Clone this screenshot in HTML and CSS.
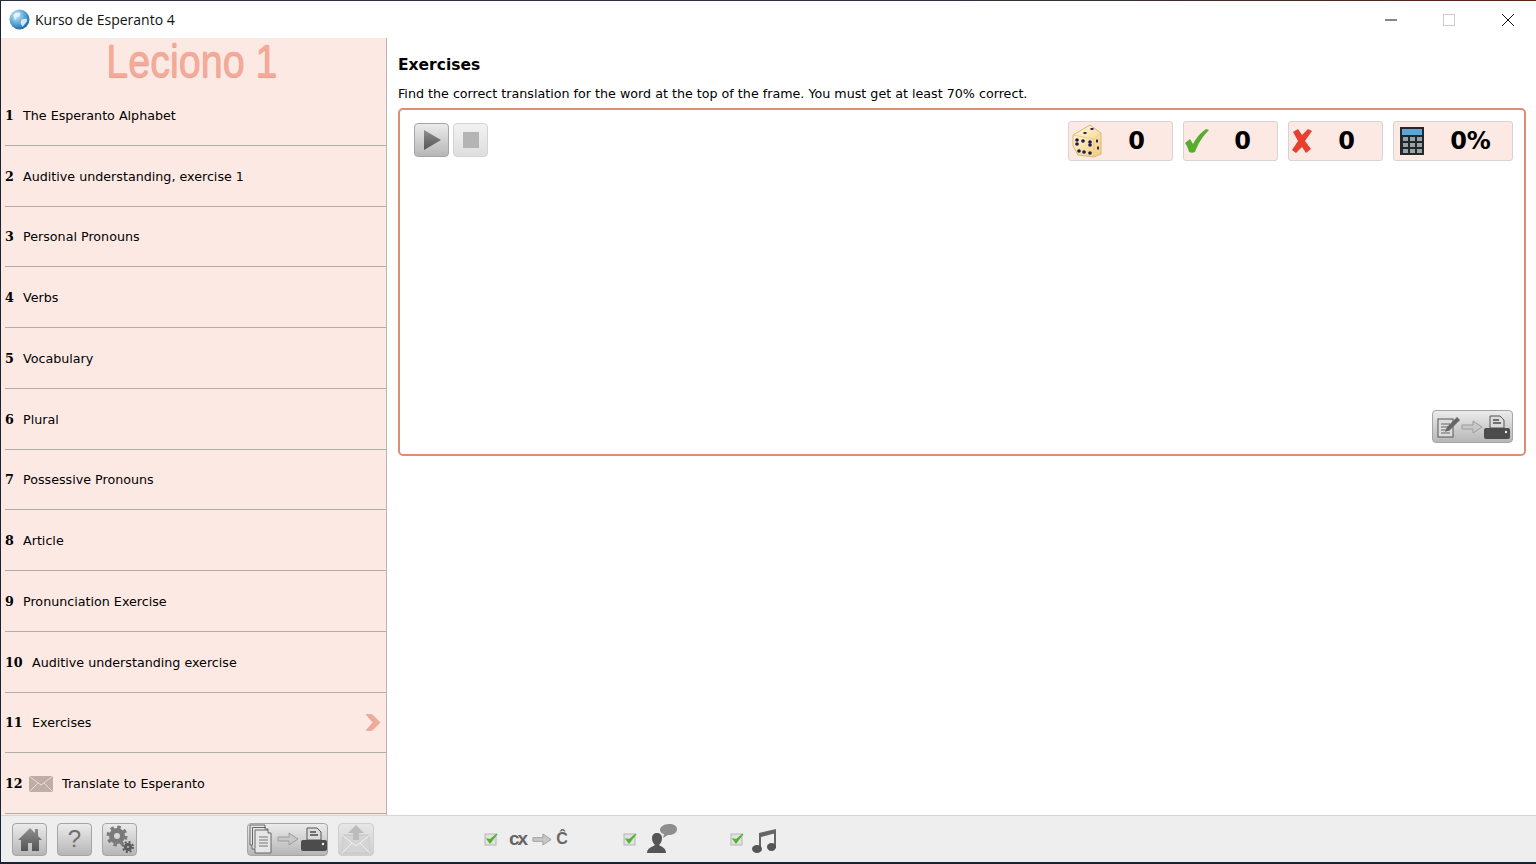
FILE: index.html
```html
<!DOCTYPE html>
<html lang="en">
<head>
  <meta charset="UTF-8">
  <title>Kurso de Esperanto 4</title>
  <link rel="stylesheet" href="styles.css">
</head>
<body>
  <svg class="defs" width="0" height="0">
    <defs>
      <radialGradient id="globe" cx=".35" cy=".3" r=".8">
        <stop offset="0" stop-color="#cfeaf9"/>
        <stop offset=".6" stop-color="#4b9bd0"/>
        <stop offset="1" stop-color="#155a94"/>
      </radialGradient>
      <linearGradient id="greyIcon" x1="0" y1="0" x2="0" y2="1">
        <stop offset="0" stop-color="#8f8f8f"/>
        <stop offset="1" stop-color="#545454"/>
      </linearGradient>
      <linearGradient id="diceFace" x1="0" y1="0" x2="1" y2="1">
        <stop offset="0" stop-color="#fffbe0"/>
        <stop offset="1" stop-color="#f4cc78"/>
      </linearGradient>
      <symbol id="arrow" viewBox="0 0 22 14">
        <path d="M1 5h11V1l9 6-9 6V9H1z" fill="#c8c8c8" stroke="#9c9c9c"/>
      </symbol>
      <symbol id="printer" viewBox="0 0 26 24">
        <path d="M6 1h10l4 4v8H6z" fill="#dcdcdc" stroke="#555" stroke-width="1"/>
        <path d="M9 5h6M9 8h8" stroke="#4c4c4c" stroke-width="1.4"/>
        <rect x="0" y="13" width="26" height="11" rx="2" fill="#4c4c4c"/>
        <circle cx="22" cy="17" r="1.2" fill="#eee"/>
      </symbol>
      <symbol id="tick" viewBox="0 0 14 14">
        <rect x="1" y="2" width="11" height="11" fill="#e2e2e2" stroke="#b5b5b5"/>
        <path d="M3 7l3 4 7-9-6.500 5.500z" fill="#4fb52e" stroke="#4fb52e" stroke-width="1.200"/>
      </symbol>
    </defs>
  </svg>

  <div class="window">
    <div class="titlebar">
      <svg class="app-icon" viewBox="0 0 20 20">
        <circle cx="10" cy="10" r="9.500" fill="url(#globe)"/>
        <path d="M4 6c2-3 5-3 7-2l-1 3-3 1-1 3zM12 10l5-1 0 3-4 5-2-3z" fill="#eaf6fc" opacity=".85"/>
      </svg>
      <span class="app-name">Kurso de Esperanto 4</span>
      <div class="win-controls">
        <svg class="win-btn" viewBox="0 0 12 12"><path d="M0 6h12" stroke="#111"/></svg>
        <svg class="win-btn win-max" viewBox="0 0 12 12"><rect x=".5" y=".5" width="11" height="11" fill="none" stroke="#ccc"/></svg>
        <svg class="win-btn" viewBox="0 0 12 12"><path d="M0 0l12 12M12 0L0 12" stroke="#111"/></svg>
      </div>
    </div>

    <div class="content">
      <aside class="sidebar">
        <div class="lesson-head"><span class="lesson-title">Leciono 1</span></div>
        <ul class="lesson-list">
          <li class="lesson"><b>1</b><span>The Esperanto Alphabet</span></li>
          <li class="lesson"><b>2</b><span>Auditive understanding, exercise 1</span></li>
          <li class="lesson"><b>3</b><span>Personal Pronouns</span></li>
          <li class="lesson"><b>4</b><span>Verbs</span></li>
          <li class="lesson"><b>5</b><span>Vocabulary</span></li>
          <li class="lesson"><b>6</b><span>Plural</span></li>
          <li class="lesson"><b>7</b><span>Possessive Pronouns</span></li>
          <li class="lesson"><b>8</b><span>Article</span></li>
          <li class="lesson"><b>9</b><span>Pronunciation Exercise</span></li>
          <li class="lesson wide"><b>10</b><span>Auditive understanding exercise</span></li>
          <li class="lesson wide"><b>11</b><span>Exercises</span>
            <svg class="current" viewBox="0 0 16 16"><path d="M1 0h6l8 8-8 8H1l7-8z" fill="#f4a896" stroke="#c9a79c" stroke-width=".6"/></svg>
          </li>
          <li class="lesson wide"><b>12</b>
            <svg class="envelope" viewBox="0 0 24 16">
              <rect width="24" height="16" rx="1" fill="#bfaea6"/>
              <path d="M0 0l12 9L24 0M0 16l9-9M24 16l-9-9" fill="none" stroke="#e6dcd6"/>
            </svg>
            <span>Translate to Esperanto</span>
          </li>
        </ul>
      </aside>

      <main class="main">
        <h2 class="section-title">Exercises</h2>
        <p class="section-text">Find the correct translation for the word at the top of the frame. You must get at least 70% correct.</p>
        <section class="panel">
          <div class="panel-top">
            <div class="player">
              <button class="btn btn-play">
                <svg viewBox="0 0 20 20" width="20" height="20"><path d="M2 0l17 10L2 20z" fill="url(#greyIcon)"/></svg>
              </button>
              <button class="btn btn-play off">
                <svg viewBox="0 0 16 16" width="16" height="16"><rect width="16" height="16" fill="#b4b4b4"/></svg>
              </button>
            </div>
            <div class="stats">
              <div class="stat stat-dice">
                <svg class="stat-icon" viewBox="0 0 30 34">
                  <path d="M1 11L18 1l11 8 0 21-7 3-16-2-5-9z" fill="url(#diceFace)" stroke="#dcb877"/>
                  <path d="M1 11l21 4 7-6M22 15v18" fill="none" stroke="#e8c684" stroke-width=".8"/>
                  <g fill="#1d1650">
                    <circle cx="5" cy="16" r="1.800"/><circle cx="11" cy="17" r="1.800"/><circle cx="18" cy="18" r="1.800"/>
                    <circle cx="5" cy="20" r="1.800"/><circle cx="18" cy="21" r="1.800"/>
                    <circle cx="7" cy="27" r="1.800"/><circle cx="12" cy="28" r="1.800"/><circle cx="18" cy="29" r="1.800"/>
                    <ellipse cx="13" cy="9" rx="1.800" ry="1"/><ellipse cx="20" cy="5" rx="1.800" ry="1"/>
                    <ellipse cx="25" cy="17" rx="1" ry="1.800"/><ellipse cx="26" cy="24" rx="1" ry="1.800"/>
                  </g>
                </svg>
                <span class="stat-num">0</span>
              </div>
              <div class="stat stat-ok">
                <svg class="stat-icon" viewBox="0 0 24 24"><path d="M0 14l5-4 3 5C11 9 15 4 21 0l3 1C17 8 13 15 10 23c-2 1-4 1-6 0C3 19 2 17 0 14z" fill="#56ad2e"/></svg>
                <span class="stat-num">0</span>
              </div>
              <div class="stat stat-bad">
                <svg class="stat-icon" viewBox="0 0 20 24"><path d="M1 3l5-3 4 6 6-6 4 2-7 10 6 8-5 4-4-6-6 6-4-3 6-9z" fill="#e8402f"/></svg>
                <span class="stat-num">0</span>
              </div>
              <div class="stat stat-pct">
                <svg class="stat-icon" viewBox="0 0 24 28">
                  <rect width="24" height="28" fill="#22282b"/>
                  <rect x="2" y="2" width="20" height="6" fill="#5aa6d6"/>
                  <g fill="#9aa2a6">
                    <rect x="3" y="10" width="5" height="4"/><rect x="10" y="10" width="5" height="4"/><rect x="17" y="10" width="5" height="4"/>
                    <rect x="3" y="16" width="5" height="4"/><rect x="10" y="16" width="5" height="4"/><rect x="17" y="16" width="5" height="4"/>
                    <rect x="3" y="22" width="5" height="4"/><rect x="10" y="22" width="5" height="4"/><rect x="17" y="22" width="5" height="4"/>
                  </g>
                </svg>
                <span class="stat-num">0%</span>
              </div>
            </div>
          </div>
          <div class="panel-bottom">
            <button class="btn btn-print">
              <svg width="24" height="24" viewBox="0 0 24 24">
                <rect x="2" y="4" width="15" height="18" fill="#dcdcdc" stroke="#555"/>
                <path d="M5 9h9M5 12h9M5 15h9M5 18h9" stroke="#666"/>
                <path d="M9 17l2-5L21 2l3 3-10 10z" fill="#666"/>
              </svg>
              <svg width="22" height="14"><use href="#arrow"/></svg>
              <svg width="26" height="24"><use href="#printer"/></svg>
            </button>
          </div>
        </section>
      </main>
    </div>

    <footer class="footer">
      <div class="tools">
        <button class="btn btn-tool">
          <svg viewBox="0 0 26 26" width="26" height="26">
            <path d="M13 2L1 14h3v11h7v-8h4v8h7V14h3l-4-4V3h-3v4z" fill="url(#greyIcon)"/>
          </svg>
        </button>
        <button class="btn btn-tool"><span class="help-mark">?</span></button>
        <button class="btn btn-tool">
          <svg viewBox="0 0 28 28" width="28" height="28">
            <circle cx="11" cy="11" r="5.500" fill="none" stroke="#7a7a7a" stroke-width="5"/>
            <circle cx="11" cy="11" r="9" fill="none" stroke="#7a7a7a" stroke-width="3" stroke-dasharray="3.500 3.570"/>
            <circle cx="22" cy="22" r="2.500" fill="none" stroke="#5c5c5c" stroke-width="3"/>
            <circle cx="22" cy="22" r="5" fill="none" stroke="#5c5c5c" stroke-width="2" stroke-dasharray="2 1.930"/>
          </svg>
        </button>
      </div>
      <div class="tools tools-print">
        <button class="btn btn-wide">
          <svg width="26" height="30" viewBox="0 0 26 30">
            <path d="M1 1h15v4h3v4h3v20H6v-4H3v-4H1z" fill="#e6e6e6" stroke="#666"/>
            <path d="M3.500 21V3.500h13M6 24.500V6h13" fill="none" stroke="#666"/>
            <path d="M10 13h9M10 16h9M10 19h9M10 22h9" stroke="#777"/>
          </svg>
          <svg width="22" height="14"><use href="#arrow"/></svg>
          <svg width="26" height="24"><use href="#printer"/></svg>
        </button>
        <button class="btn btn-mail">
          <svg viewBox="0 0 28 30" width="28" height="30">
            <path d="M0 11h28v18H0z" fill="#d4d4d4" stroke="#c4c4c4"/>
            <path d="M0 29l10-10M28 29L18 19M0 11l14 11 14-11" fill="none" stroke="#eee"/>
            <path d="M14 1l8 8h-5v7h-6V9H6z" fill="#bcbcbc"/>
          </svg>
        </button>
      </div>
      <div class="options">
        <div class="option opt-convert">
          <svg class="tick" width="14" height="14"><use href="#tick"/></svg>
          <span class="cx">cx</span>
          <svg width="20" height="13"><use href="#arrow"/></svg>
          <span class="cx cx-to">Ĉ</span>
        </div>
        <div class="option opt-speech">
          <svg class="tick" width="14" height="14"><use href="#tick"/></svg>
          <svg viewBox="0 0 30 30" width="30" height="30">
            <path d="M0 29c0-5 5-6 8-8-2-2-3-4-3-7 0-3 2-5 5-5s5 2 5 5c0 3-1 5-3 7 3 2 7 3 7 8z" fill="#555"/>
            <path d="M13 6c0-3 4-6 9-6s8 2 8 5c0 4-4 6-9 6l-5 3 1-4c-2 0-4-2-4-4z" fill="#8e8e8e"/>
          </svg>
        </div>
        <div class="option opt-music">
          <svg class="tick" width="14" height="14"><use href="#tick"/></svg>
          <svg class="note" viewBox="0 0 25 24" width="25" height="24">
            <path d="M7 4l17-4v4L9 8v12H7zM22 3h2v16h-2z" fill="#666"/>
            <ellipse cx="5" cy="20" rx="5" ry="4" fill="#555"/>
            <ellipse cx="19.500" cy="18" rx="4.500" ry="4" fill="#555"/>
          </svg>
        </div>
      </div>
    </footer>
  </div>
</body>
</html>
```

FILE: styles.css
```css
* {
  box-sizing: border-box;
}

html,
body {
  margin: 0;
  height: 100%;
  overflow: hidden;
}

body {
  /* desktop showing around the window */
  background: linear-gradient(to right, #2a3242, #2a3242 60%, #5a2412) 0 0 / 100% 1px no-repeat, #1a2238;
  font-family: 'DejaVu Sans', Verdana, sans-serif;
  color: #000;
}

.defs {
  position: absolute;
}

.window {
  height: 861px;
  margin: 1px 0 0 1px;
  display: flex;
  flex-direction: column;
  background-color: #fff;
}

/* title bar */
.titlebar {
  height: 37px;
  flex: none;
  display: flex;
  align-items: center;
  padding: 0 22px 0 8px;
  background-color: #fff;
}

.app-icon {
  width: 21px;
  height: 21px;
  margin-right: 5px;
}

.app-name {
  font-family: 'Open Sans', 'Noto Sans', sans-serif;
  font-size: 14px;
  color: #111;
}

.win-controls {
  margin-left: auto;
  display: flex;
  gap: 46px;
}

.win-btn {
  width: 12px;
  height: 12px;
}

.win-max {
  margin-right: 1px;
}

.content {
  flex: 1;
  display: flex;
  min-height: 0;
}

/* lesson list */
.sidebar {
  width: 386px;
  flex: none;
  display: flex;
  flex-direction: column;
  padding-left: 1px;
  background-color: #fde9e4;
  border-right: 1px solid #b9b5b0;
}

.lesson-head {
  height: 47px;
  flex: none;
  text-align: center;
}

.lesson-title {
  display: inline-block;
  font-family: 'Liberation Sans', Arial, sans-serif;
  font-size: 47px;
  line-height: 46px;
  color: #f7a998;
  -webkit-text-stroke: .4px #f7a998;
  text-shadow: 0 1px 1px #c9a196;
  transform: scaleX(.84);
  margin-left: -5px;
}

.lesson-list {
  flex: 1;
  list-style-type: none;
  margin: 0;
  padding: 0 0 1px;
  display: flex;
  flex-direction: column;
}

.lesson {
  flex: 1;
  display: flex;
  align-items: center;
  margin-left: 3px;
  padding-top: 1px;
  font-size: 12.700px;
  border-bottom: 1px solid #b1aeaa;
  position: relative;
}

.lesson b {
  width: 18px;
  font-family: 'DejaVu Serif', serif;
}

.lesson.wide b {
  width: 27px;
}

.current {
  position: absolute;
  right: 5px;
  top: 21px;
  width: 16px;
  height: 17px;
}

.envelope {
  width: 24px;
  height: 16px;
  margin: 0 9px 0 -3px;
}

/* right side */
.main {
  flex: 1;
  padding: 17px 10px 0 11px;
}

.section-title {
  margin: 0;
  font-size: 15.500px;
  line-height: 20px;
}

.section-text {
  margin: 10px 0 5px;
  font-size: 12.700px;
  line-height: 18px;
}

.panel {
  height: 348px;
  display: flex;
  flex-direction: column;
  justify-content: space-between;
  padding: 11px 11px 11px 14px;
  border: 2px solid #dc8f72;
  border-radius: 5px;
}

.panel-top {
  display: flex;
  justify-content: space-between;
  align-items: flex-start;
}

.player {
  display: flex;
  gap: 4px;
  margin-top: 2px;
}

.stats {
  display: flex;
  gap: 10px;
}

.stat {
  height: 40px;
  display: flex;
  align-items: center;
  padding: 0 1px;
  background-color: #fde9e4;
  border: 1px solid #d6d3d0;
  border-radius: 3px;
}

.stat-dice { width: 105px; }
.stat-ok { width: 95px; }
.stat-bad { width: 95px; }
.stat-pct { width: 120px; }

.stat-icon {
  height: 34px;
  width: 30px;
  flex: none;
}

.stat-dice .stat-icon {
  margin-left: 2px;
}

.stat-ok .stat-icon {
  height: 24px;
  width: 24px;
}

.stat-bad .stat-icon {
  height: 24px;
  width: 20px;
  margin-left: 2px;
}

.stat-pct .stat-icon {
  height: 28px;
  width: 24px;
  margin-left: 5px;
}

.stat-num {
  flex: 1;
  text-align: center;
  font-size: 24px;
  font-weight: bold;
}

.stat-pct .stat-num {
  padding-left: 6px;
}

.panel-bottom {
  display: flex;
  justify-content: flex-end;
}

/* buttons */
.btn {
  display: flex;
  align-items: center;
  justify-content: center;
  padding: 0;
  background: linear-gradient(#ebebeb, #b6b6b6);
  border: 1px solid #a5a5a5;
  border-radius: 4px;
}

.btn-play {
  width: 35px;
  height: 34px;
}

.btn-play.off {
  background: linear-gradient(#f2f2f2, #dedede);
  border-color: #d4d4d4;
}

.btn-print {
  width: 81px;
  height: 33px;
  gap: 1px;
}

/* bottom bar */
.footer {
  height: 47px;
  flex: none;
  display: flex;
  align-items: center;
  background-color: #eeeeee;
  border-top: 1px solid #e6cfc9;
  padding-left: 11px;
}

.tools {
  display: flex;
  gap: 10px;
}

.btn-tool {
  width: 35px;
  height: 33px;
}

.help-mark {
  font-size: 24px;
  font-family: 'Liberation Sans', Arial, sans-serif;
  color: #6e6e6e;
}

.tools-print {
  margin-left: 110px;
}

.btn-wide {
  width: 81px;
  height: 33px;
  gap: 2px;
}

.btn-mail {
  width: 36px;
  height: 33px;
  background: linear-gradient(#e6e6e6, #cfcfcf);
  border-color: #cfcfcf;
}

.options {
  display: flex;
  align-items: center;
  margin-left: 110px;
}

.option {
  display: flex;
  align-items: center;
}

.tick {
  flex: none;
}

.cx {
  font-family: 'Liberation Sans', Arial, sans-serif;
  font-weight: bold;
  font-size: 19px;
  letter-spacing: -2px;
  color: #666;
}

.cx-to {
  font-size: 16px;
  letter-spacing: 0;
  margin-top: 0;
}

.opt-convert .tick {
  margin-right: 11px;
}

.opt-convert svg + .cx + svg {
  margin: 0 4px 0 6px;
}

.opt-speech {
  margin-left: 55px;
}

.opt-speech .tick {
  margin-right: 10px;
}

.opt-music {
  margin-left: 53px;
}

.opt-music .tick {
  margin-right: 8px;
}

.note {
  margin-top: 4px;
}
```
